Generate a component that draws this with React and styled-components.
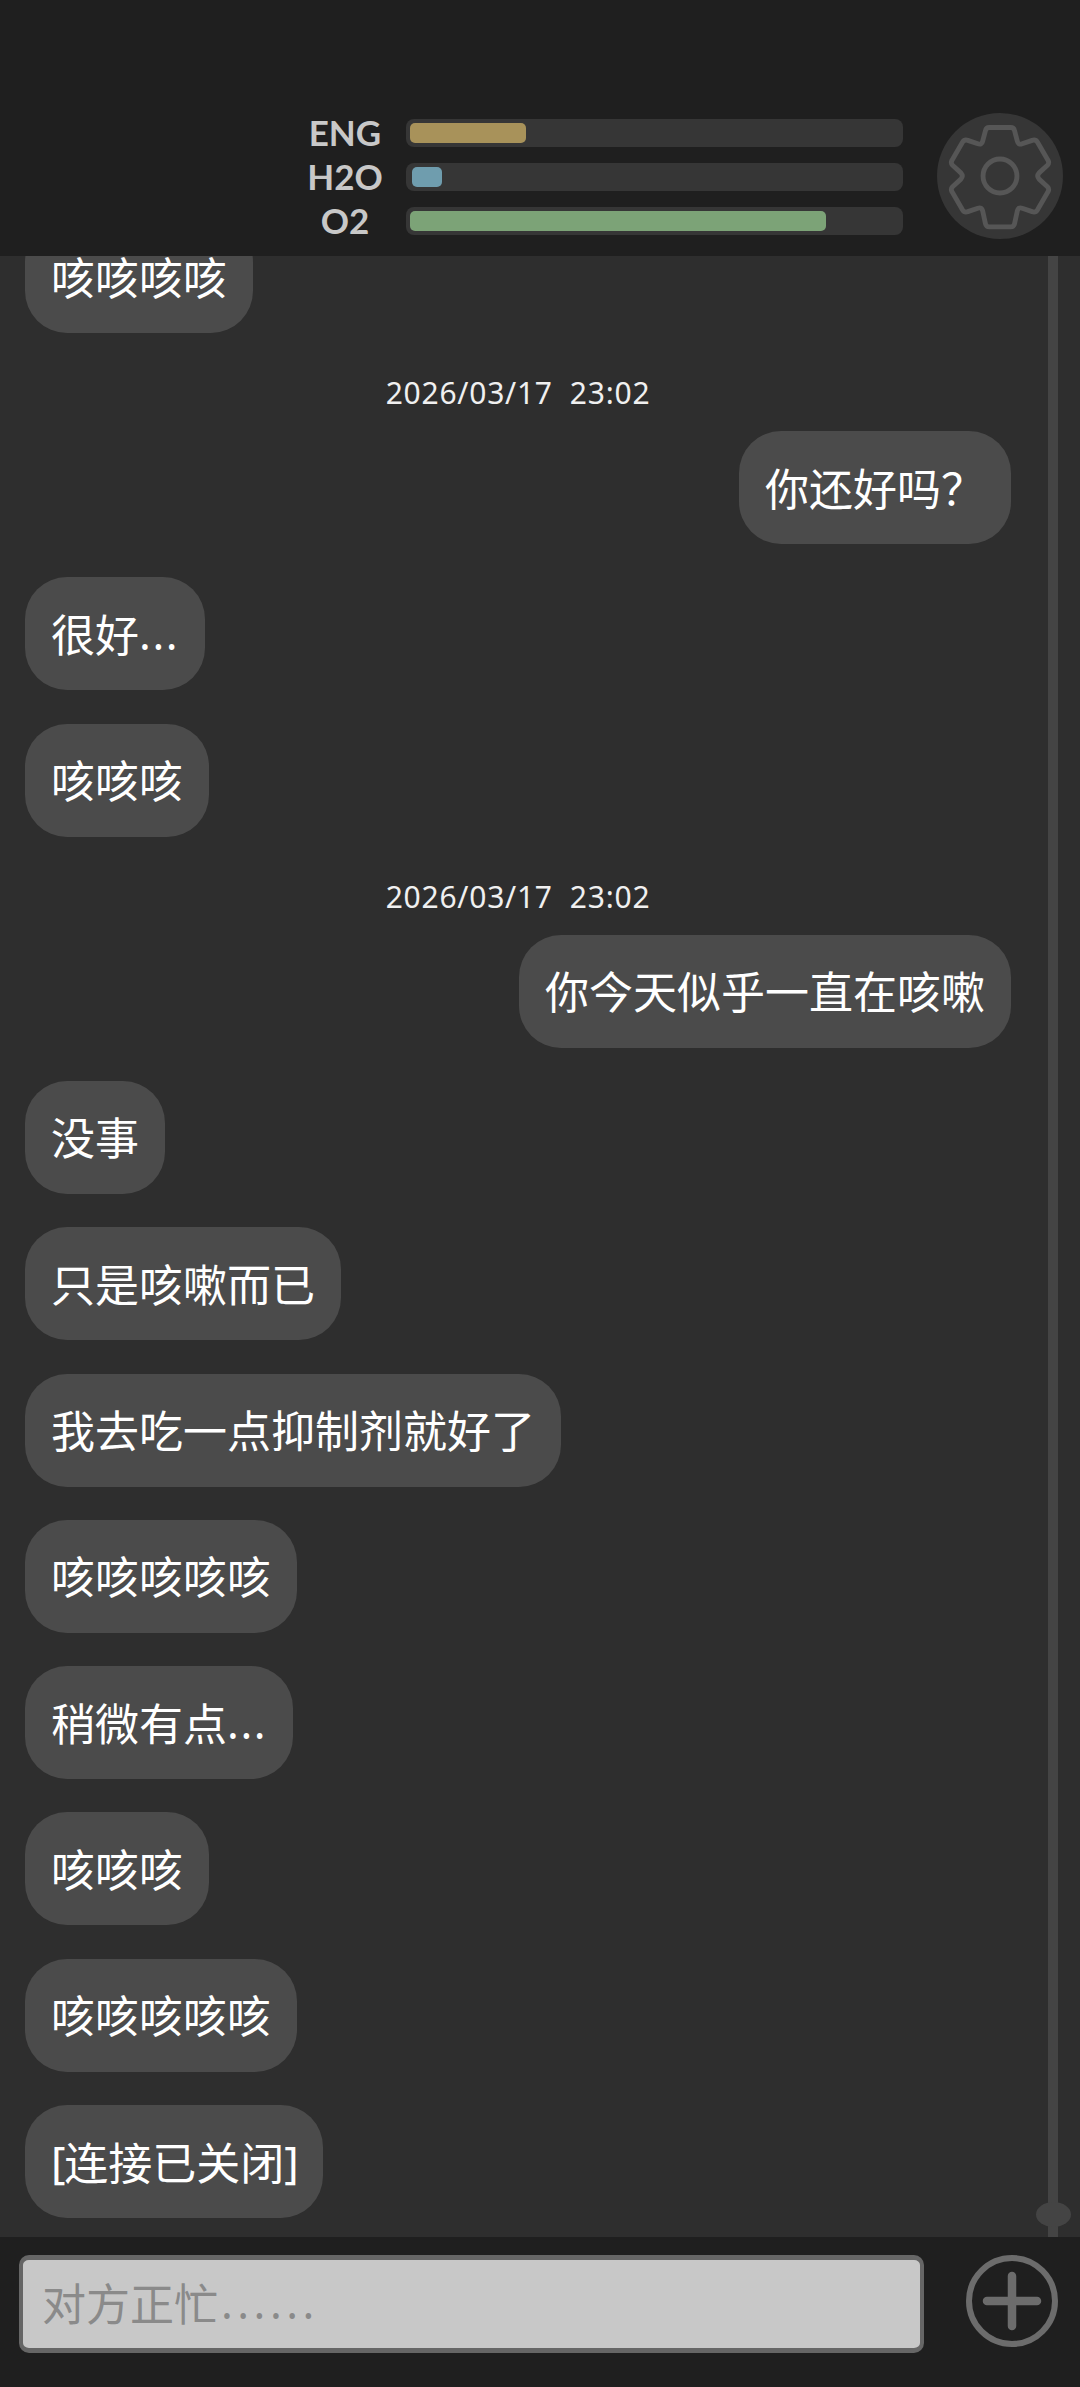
import React from 'react';
import styled, { createGlobalStyle } from 'styled-components';

const GlobalStyle = createGlobalStyle`
  html, body {
    margin: 0;
    padding: 0;
    background: #1f1f1f;
  }
`;

// the dots and brackets sit a bit wider / tighter than Noto Sans sets them
const Punct = styled.span`
  letter-spacing: ${(p) => p.$spacing}px;
  margin-left: ${(p) => p.$offset || 0}px;
`;

const bars = [
  { label: 'ENG', fill: '#a8925a', start: 4, width: 116 },
  { label: 'H2O', fill: '#6f9dae', start: 6, width: 30 },
  { label: 'O2', fill: '#7ca377', start: 4, width: 416 },
];

const thread = [
  { from: 'them', text: '咳咳咳咳' },
  { stamp: '2026/03/17  23:02' },
  { from: 'me', text: '你还好吗？' },
  { from: 'them', text: <>很好<Punct $spacing={1.6}>...</Punct></> },
  { from: 'them', text: '咳咳咳' },
  { stamp: '2026/03/17  23:02' },
  { from: 'me', text: '你今天似乎一直在咳嗽' },
  { from: 'them', text: '没事' },
  { from: 'them', text: '只是咳嗽而已' },
  { from: 'them', text: '我去吃一点抑制剂就好了' },
  { from: 'them', text: '咳咳咳咳咳' },
  { from: 'them', text: <>稍微有点<Punct $spacing={1.6}>...</Punct></> },
  { from: 'them', text: '咳咳咳' },
  { from: 'them', text: '咳咳咳咳咳' },
  { from: 'them', text: <><Punct $spacing={-1.3}>[</Punct>连接已关闭<Punct $spacing={-1.3}>]</Punct></> },
];

const App = () => (
  <>
    <GlobalStyle />
    <Screen>
      <Header>
        <Stats>
          {bars.map((bar) => (
            <StatRow key={bar.label}>
              <StatLabel>{bar.label}</StatLabel>
              <Track>
                <Fill $color={bar.fill} $start={bar.start} style={{ width: bar.width }} />
              </Track>
            </StatRow>
          ))}
        </Stats>
        <SettingsButton>
          <svg width="126" height="126" viewBox="61 46 364 364" fill="none">
            <path
              d="M212 88 H274 Q283 88 285 97 L293 127 Q296 139 307 135 L336 125 Q346 122 351 130 L382 183 Q386 191 380 197 L356 219 Q348 228 356 237 L380 259 Q386 265 382 273 L351 326 Q346 334 336 331 L307 321 Q296 317 293 329 L285 366 Q283 375 274 375 H212 Q203 375 201 366 L193 329 Q190 317 179 321 L150 331 Q140 334 135 326 L104 273 Q100 265 106 259 L130 237 Q138 228 130 219 L106 197 Q100 191 104 183 L135 130 Q140 122 150 125 L179 135 Q190 139 193 127 L201 97 Q203 88 212 88 Z"
              stroke="#565656"
              strokeWidth="14"
              strokeLinejoin="round"
            />
            <circle cx="243" cy="228" r="49" stroke="#565656" strokeWidth="14" />
          </svg>
        </SettingsButton>
      </Header>
      <Messages>
        {thread.map((item, i) =>
          item.stamp ? (
            <Stamp key={i}>{item.stamp}</Stamp>
          ) : (
            <Bubble key={i} $mine={item.from === 'me'}>{item.text}</Bubble>
          )
        )}
        <ScrollTrack>
          <ScrollThumb />
        </ScrollTrack>
      </Messages>
      <Footer>
        <InputBox>对方正忙<Punct $spacing={4.5} $offset={3}>......</Punct></InputBox>
        <svg width="92" height="92" viewBox="0 0 92 92" fill="none">
          <circle cx="46" cy="46" r="43" stroke="#6c6c6c" strokeWidth="6" />
          <path d="M21 46 H71 M46 21 V71" stroke="#6c6c6c" strokeWidth="8.5" strokeLinecap="round" />
        </svg>
      </Footer>
    </Screen>
  </>
);

const Screen = styled.div`
  height: 100vh;
  display: flex;
  flex-direction: column;
  overflow: hidden;
  font-family: "Noto Sans", "Noto Sans CJK SC", sans-serif;
`;

const Header = styled.header`
  height: 256px;
  flex: none;
  box-sizing: border-box;
  padding: 113px 17px 0 305px;
  display: flex;
  align-items: flex-start;
  gap: 34px;
  background: #1f1f1f;
`;

const Stats = styled.div`
  flex: 1;
  padding-top: 6px;
  display: flex;
  flex-direction: column;
  gap: 16px;
`;

const StatRow = styled.div`
  display: flex;
  align-items: center;
  gap: 21px;
  height: 28px;
`;

const StatLabel = styled.span`
  width: 80px;
  padding-bottom: 3px;
  text-align: center;
  font-family: Lato, sans-serif;
  font-size: 35px;
  font-weight: 700;
  line-height: 28px;
  color: #c8c8c8;
`;

const Track = styled.div`
  flex: 1;
  height: 28px;
  display: flex;
  align-items: center;
  border-radius: 8px;
  background: #363636;
`;

const Fill = styled.div`
  height: 20px;
  margin-left: ${(p) => p.$start}px;
  border-radius: 5px;
  background: ${(p) => p.$color};
`;

const SettingsButton = styled.div`
  width: 126px;
  height: 126px;
  flex: none;
  border-radius: 50%;
  background: #363636;
`;

const Messages = styled.main`
  position: relative;
  flex: 1;
  min-height: 0;
  overflow: hidden;
  display: flex;
  flex-direction: column;
  justify-content: flex-end;
  padding: 0 69px 0 25px;
  background: #2e2e2e;
`;

const Stamp = styled.div`
  flex: none;
  margin: 11.7px 0 23px;
  height: 30px;
  line-height: 30px;
  text-align: center;
  white-space: pre;
  font-size: 30px;
  letter-spacing: 0.75px;
  color: #f0f0f0;
`;

const Bubble = styled.div`
  flex: none;
  align-self: ${(p) => (p.$mine ? 'flex-end' : 'flex-start')};
  box-sizing: border-box;
  height: 113px;
  margin-bottom: 33.3px;
  padding: 0 26px 2px;
  display: flex;
  align-items: center;
  border-radius: 42px;
  background: #4b4b4b;
  color: #fff;
  font-size: 44px;
  white-space: nowrap;

  &:nth-last-child(2) {
    margin-bottom: 19px;
  }
`;

const ScrollTrack = styled.div`
  position: absolute;
  top: 0;
  bottom: 0;
  left: 1048px;
  width: 10px;
  background: #444;
`;

const ScrollThumb = styled.div`
  position: absolute;
  left: -12px;
  bottom: 10px;
  width: 35px;
  height: 25px;
  border-radius: 50%;
  background: #444;
`;

const Footer = styled.footer`
  height: 150px;
  flex: none;
  box-sizing: border-box;
  padding: 18px 22px 0 19px;
  display: flex;
  align-items: flex-start;
  justify-content: space-between;
  background: #1f1f1f;
`;

const InputBox = styled.div`
  width: 905px;
  height: 98px;
  box-sizing: border-box;
  padding: 0 0 4px 19px;
  display: flex;
  align-items: center;
  white-space: pre;
  border-style: solid;
  border-width: 5px 4px 5px 4px;
  border-color: #666;
  border-radius: 10px;
  background: #c8c8c8;
  color: #8a8a8a;
  font-size: 44px;
`;

export default App;
